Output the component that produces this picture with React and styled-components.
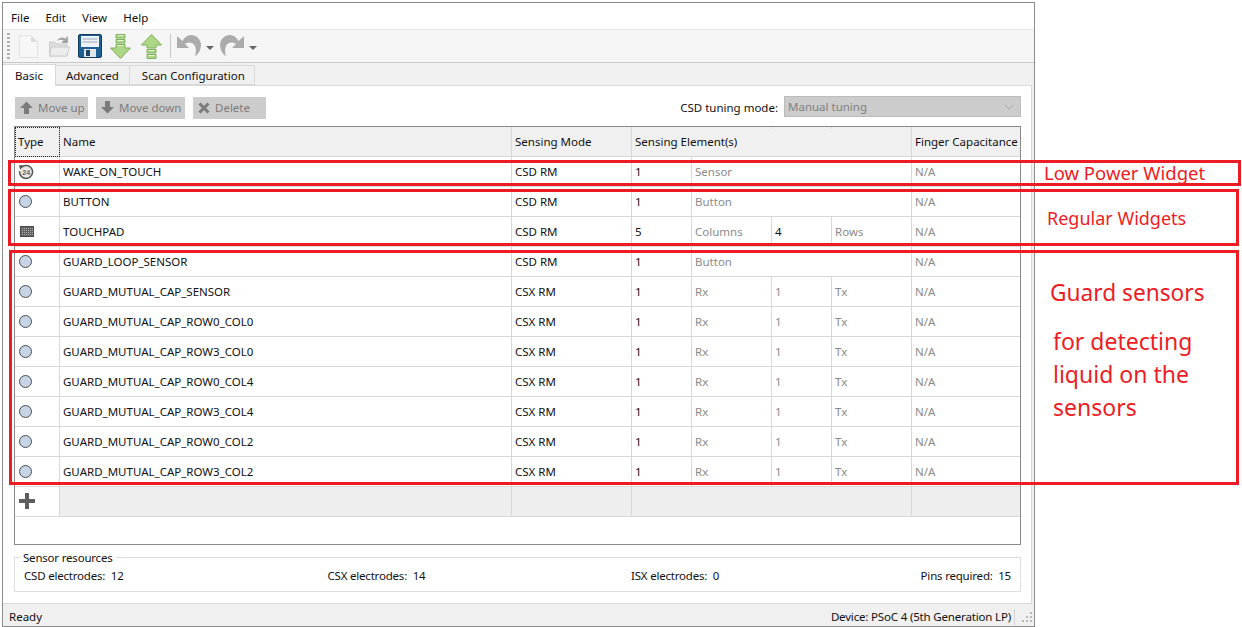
import React from "react"
import styled, { createGlobalStyle } from "styled-components"

const GlobalStyle = createGlobalStyle`
  html, body {
    margin: 0;
    padding: 0;
    background: #fff;
  }
  body {
    font-family: "Noto Sans", "Open Sans", sans-serif;
    font-size: 11.5px;
    color: #111;
  }
`

const COLUMNS = "45px 452px 120px 60px 80px 60px 80px 108px"

const widgets = [
  { icon: "wake", name: "WAKE_ON_TOUCH", mode: "CSD RM", count: 1, label: "Sensor" },
  { icon: "button", name: "BUTTON", mode: "CSD RM", count: 1, label: "Button" },
  { icon: "pad", name: "TOUCHPAD", mode: "CSD RM", count: 5, label: "Columns", second: 4, secondLabel: "Rows", active: true },
  { icon: "button", name: "GUARD_LOOP_SENSOR", mode: "CSD RM", count: 1, label: "Button" },
  { icon: "button", name: "GUARD_MUTUAL_CAP_SENSOR", mode: "CSX RM", count: 1, label: "Rx", second: 1, secondLabel: "Tx" },
  { icon: "button", name: "GUARD_MUTUAL_CAP_ROW0_COL0", mode: "CSX RM", count: 1, label: "Rx", second: 1, secondLabel: "Tx" },
  { icon: "button", name: "GUARD_MUTUAL_CAP_ROW3_COL0", mode: "CSX RM", count: 1, label: "Rx", second: 1, secondLabel: "Tx" },
  { icon: "button", name: "GUARD_MUTUAL_CAP_ROW0_COL4", mode: "CSX RM", count: 1, label: "Rx", second: 1, secondLabel: "Tx" },
  { icon: "button", name: "GUARD_MUTUAL_CAP_ROW3_COL4", mode: "CSX RM", count: 1, label: "Rx", second: 1, secondLabel: "Tx" },
  { icon: "button", name: "GUARD_MUTUAL_CAP_ROW0_COL2", mode: "CSX RM", count: 1, label: "Rx", second: 1, secondLabel: "Tx" },
  { icon: "button", name: "GUARD_MUTUAL_CAP_ROW3_COL2", mode: "CSX RM", count: 1, label: "Rx", second: 1, secondLabel: "Tx" },
]

const NewFileIcon = () => (
  <svg width="19" height="23" viewBox="0 0 19 23">
    <path d="M0.5 0.5H12L18.5 7V22.5H0.5Z" fill="#f7f7f7" stroke="#e3e3e3" />
    <path d="M12 0.5V7H18.5Z" fill="#dddddd" />
  </svg>
)

const OpenIcon = () => (
  <svg width="23" height="22" viewBox="0 0 23 22">
    <path d="M1.5 7H7L9 9H19V21H1.5Z" fill="#dcdcdc" stroke="#cdcdcd" />
    <path d="M1.5 21L3.5 12H21.5L19 21Z" fill="#ececec" stroke="#cdcdcd" />
    <path d="M9 6C10.5 2.5 14.5 1.5 17.5 3.5L20 1V8H13L15.5 5.5C14 4.5 11.5 4.5 9 6Z" fill="#a5a5a5" />
  </svg>
)

const SaveIcon = () => (
  <svg width="24" height="24" viewBox="0 0 24 24">
    <rect x="0.5" y="0.5" width="23" height="23" rx="1.5" fill="#1b5f93" stroke="#173d5c" />
    <rect x="3" y="2" width="18" height="11" fill="#eef2f6" />
    <path d="M4.5 5H19.5M4.5 8H19.5" stroke="#b4c2cf" strokeWidth="1.5" />
    <rect x="6" y="15" width="12" height="8" fill="#dfe6ec" />
    <rect x="8" y="16" width="4" height="6" fill="#1f4468" />
  </svg>
)

const DownloadIcon = () => (
  <svg width="21" height="25" viewBox="0 0 21 25">
    <path d="M6 0.5H15V4H6ZM6 5.5H15V9H6ZM6 10.5H15V14H20.5L10.5 24.5L0.5 14H6Z" fill="#aed785" stroke="#7fb05a" />
    <path d="M7.5 1.5H13.5M7.5 6.5H13.5M7.5 11.5H13.5" stroke="#e2f2d0" />
  </svg>
)

const UploadIcon = () => (
  <svg width="21" height="25" viewBox="0 0 21 25">
    <path d="M10.5 0.5L20.5 11H15V14H6V11H0.5ZM6 15.5H15V19H6ZM6 20.5H15V24.5H6Z" fill="#aed785" stroke="#7fb05a" />
    <path d="M7.5 16.5H13.5M7.5 21.5H13.5" stroke="#e2f2d0" />
  </svg>
)

const UndoIcon = ({ flip }) => (
  <svg width="24" height="22" viewBox="0 0 24 22" style={flip ? { transform: "scaleX(-1)" } : undefined}>
    <path d="M0 1V13H12L8 9C11 6.5 16 7 18 11C19.5 14 19 18 18 21.5C22 18.5 24 14 24 10C24 4 19 0 14 0C10.5 0 7.5 2 5.5 6Z" fill="#ababab" />
  </svg>
)

const Caret = styled.i`
  width: 0;
  height: 0;
  margin: 3px 0 0 5px;
  border-left: 4px solid transparent;
  border-right: 4px solid transparent;
  border-top: 4px solid #666;
`

const WakeIcon = () => (
  <svg width="16" height="16" viewBox="0 0 18 18">
    <circle cx="9" cy="9.5" r="7" fill="#e8e8e8" />
    <path d="M4 3.6A7.3 7.3 0 1 1 1.8 8" fill="none" stroke="#555" strokeWidth="1.7" />
    <path d="M1 1.5L6.5 1.5L2.5 6.5Z" fill="#555" />
    <text x="9.3" y="12.5" fontSize="8" fontWeight="700" textAnchor="middle" fill="#666" fontFamily="Liberation Sans, sans-serif">24</text>
  </svg>
)

const PadIcon = () => (
  <svg width="14" height="11" viewBox="0 0 14 11" style={{ marginLeft: 2 }}>
    <defs>
      <pattern id="padDots" width="2" height="2" patternUnits="userSpaceOnUse">
        <rect width="2" height="2" fill="#626262" />
        <rect width="1" height="1" fill="#acacac" />
      </pattern>
    </defs>
    <rect x="0.5" y="0.5" width="13" height="10" fill="url(#padDots)" stroke="#4a4a4a" />
  </svg>
)

const PlusIcon = () => (
  <svg width="16" height="16" viewBox="0 0 16 16">
    <path d="M6 0H10V6H16V10H10V16H6V10H0V6H6Z" fill="#5e5e5e" />
  </svg>
)

const ArrowUp = () => (
  <svg width="13" height="13" viewBox="0 0 13 13">
    <path d="M6.5 0.5L13 7H9V13H4V7H0Z" fill="#7b7b7b" />
  </svg>
)

const ArrowDown = () => (
  <svg width="13" height="13" viewBox="0 0 13 13">
    <path d="M4 0H9V6H13L6.5 12.5L0 6H4Z" fill="#7b7b7b" />
  </svg>
)

const Cross = () => (
  <svg width="12" height="12" viewBox="0 0 12 12">
    <path d="M1.5 1.5L10.5 10.5M10.5 1.5L1.5 10.5" stroke="#7b7b7b" strokeWidth="3" />
  </svg>
)

const Chevron = () => (
  <svg width="10" height="6" viewBox="0 0 10 6">
    <path d="M1 1L5 5L9 1" fill="none" stroke="#a8a8a8" />
  </svg>
)

const Grip = () => (
  <svg width="11" height="11" viewBox="0 0 11 11">
    <path d="M8 1h2v2H8zM4 5h2v2H4zM8 5h2v2H8zM0 9h2v2H0zM4 9h2v2H4zM8 9h2v2H8z" fill="#b8b8b8" />
  </svg>
)

const TypeIcon = ({ kind }) => {
  if (kind === "wake") return <WakeIcon />
  if (kind === "pad") return <PadIcon />
  return <Dot />
}

const App = () => {
  return (
    <>
      <GlobalStyle />
      <Page>
        <Window>
          <MenuBar>
            <MenuItem>File</MenuItem>
            <MenuItem>Edit</MenuItem>
            <MenuItem>View</MenuItem>
            <MenuItem>Help</MenuItem>
          </MenuBar>
          <Toolbar>
            <Handle />
            <ToolSlot $gap={9}><NewFileIcon /></ToolSlot>
            <ToolSlot $gap={10}><OpenIcon /></ToolSlot>
            <ToolSlot $gap={7}><SaveIcon /></ToolSlot>
            <ToolSlot $gap={8}><DownloadIcon /></ToolSlot>
            <ToolSlot $gap={10}><UploadIcon /></ToolSlot>
            <ToolSeparator />
            <ToolSlot $gap={6}>
              <UndoIcon />
              <Caret />
            </ToolSlot>
            <ToolSlot $gap={6}>
              <UndoIcon flip />
              <Caret />
            </ToolSlot>
          </Toolbar>
          <TabBar>
            <Tab $active $pad={12}>Basic</Tab>
            <Tab $pad={10}>Advanced</Tab>
            <Tab $pad={12} $padRight={9}>Scan Configuration</Tab>
          </TabBar>
          <Panel>
            <Actions>
              <ActionButton $width={73}><ArrowUp />Move up</ActionButton>
              <ActionButton $width={89}><ArrowDown />Move down</ActionButton>
              <ActionButton $width={73}><Cross />Delete</ActionButton>
              <TuningLabel>CSD tuning mode:</TuningLabel>
              <Combo>
                Manual tuning
                <Chevron />
              </Combo>
            </Actions>
            <Table>
              <HeaderRow>
                <HeaderCell $focused>Type</HeaderCell>
                <HeaderCell>Name</HeaderCell>
                <HeaderCell>Sensing Mode</HeaderCell>
                <HeaderCell $span={4}>
                  Sensing Element(s)
                  <Tick $left={139} />
                  <Tick $left={199} />
                </HeaderCell>
                <HeaderCell $last>Finger Capacitance</HeaderCell>
              </HeaderRow>
              {widgets.map((w) => (
                <Row key={w.name}>
                  <IconCell><TypeIcon kind={w.icon} /></IconCell>
                  <Cell>{w.name}</Cell>
                  <Cell>{w.mode}</Cell>
                  <Cell>{w.count}</Cell>
                  {w.second ? (
                    <>
                      <Cell $muted>{w.label}</Cell>
                      <Cell $muted={!w.active}>{w.second}</Cell>
                      <Cell $muted>{w.secondLabel}</Cell>
                    </>
                  ) : (
                    <Cell $muted $span={3}>{w.label}</Cell>
                  )}
                  <Cell $muted $last>N/A</Cell>
                </Row>
              ))}
              <AddRow>
                <AddCell><PlusIcon /></AddCell>
                <GrayCell />
                <GrayCell />
                <GrayCell $span={4} />
                <GrayCell $last />
              </AddRow>
            </Table>
            <Resources>
              <ResourcesTitle>Sensor resources</ResourcesTitle>
              <Stat>CSD electrodes:&nbsp; 12</Stat>
              <Stat>CSX electrodes:&nbsp; 14</Stat>
              <Stat>ISX electrodes:&nbsp; 0</Stat>
              <Stat $right>Pins required:&nbsp; 15</Stat>
            </Resources>
          </Panel>
          <StatusBar>
            <span>Ready</span>
            <DeviceInfo>Device: PSoC 4 (5th Generation LP)</DeviceInfo>
            <StatusDivider />
            <Grip />
          </StatusBar>
        </Window>
        <Outline $left={8} $top={160} $height={26} $width={1233} />
        <Outline $left={8} $top={189} $height={57} $width={1231} />
        <Outline $left={9} $top={250} $height={235} $width={1230} />
        <Note $left={1044} $top={161} $size={18.5}>Low Power Widget</Note>
        <Note $left={1047} $top={206} $size={18}>Regular Widgets</Note>
        <Note $left={1050} $top={278} $size={22.7}>Guard sensors</Note>
        <Note $left={1053} $top={326} $size={23}>for detecting</Note>
        <Note $left={1053} $top={359} $size={23}>liquid on the</Note>
        <Note $left={1053} $top={392} $size={23}>sensors</Note>
      </Page>
    </>
  )
}

const Page = styled.div`
  position: relative;
  width: 1242px;
  height: 627px;
  padding: 2px 0 0 2px;
  box-sizing: border-box;
  overflow: hidden;
`

const Window = styled.div`
  width: 1033px;
  height: 625px;
  box-sizing: border-box;
  display: flex;
  flex-direction: column;
  border: 1px solid #8c8c8c;
  background: #f0f0f0;
`

const MenuBar = styled.div`
  height: 26px;
  flex: none;
  display: flex;
  align-items: center;
  gap: 16px;
  padding: 3px 0 0 8px;
  box-sizing: border-box;
  background: #fff;
`

const MenuItem = styled.span`
  color: #111;
`

const Toolbar = styled.div`
  height: 34px;
  flex: none;
  display: flex;
  align-items: center;
  box-sizing: border-box;
  padding-left: 4px;
  background: #f5f5f5;
  border-top: 1px solid #e8e8e8;
  border-bottom: 1px solid #c8c8c8;
`

const Handle = styled.div`
  width: 3px;
  height: 26px;
  background: repeating-linear-gradient(to bottom, #b0b0b0 0 2px, transparent 2px 4px);
`

const ToolSlot = styled.div`
  display: flex;
  align-items: center;
  margin-left: ${(p) => p.$gap}px;
`

const ToolSeparator = styled.div`
  width: 1px;
  height: 24px;
  margin-left: 8px;
  background: #c8c8c8;
`

const TabBar = styled.div`
  height: 21px;
  flex: none;
  display: flex;
  align-items: flex-end;
  margin-top: 1px;
`

const Tab = styled.div`
  height: ${(p) => (p.$active ? "22px" : "20px")};
  box-sizing: border-box;
  display: flex;
  align-items: center;
  padding: 0 ${(p) => p.$padRight || p.$pad}px 0 ${(p) => p.$pad}px;
  margin-bottom: ${(p) => (p.$active ? "-1px" : "0")};
  background: ${(p) => (p.$active ? "#fff" : "#f0f0f0")};
  border: 1px solid #d9d9d9;
  border-left: ${(p) => (p.$active ? "none" : "1px solid #d9d9d9")};
  border-bottom: ${(p) => (p.$active ? "none" : "1px solid #d9d9d9")};
  position: relative;
  z-index: ${(p) => (p.$active ? 1 : 0)};
  margin-left: ${(p) => (p.$active ? "0" : "-1px")};
`

const Panel = styled.div`
  flex: 1;
  min-height: 0;
  background: #fff;
  border: 1px solid #d9d9d9;
  border-left: none;
  margin-right: 2px;
  padding: 10px 10px 0 11px;
  display: flex;
  flex-direction: column;
`

const Actions = styled.div`
  height: 23px;
  flex: none;
  display: flex;
  align-items: center;
  gap: 8px;
  padding-left: 1px;
`

const ActionButton = styled.button`
  width: ${(p) => p.$width}px;
  height: 22px;
  padding: 0 0 0 4px;
  display: flex;
  align-items: center;
  gap: 5px;
  border: 1px solid #cdcdcd;
  background: #cccccc;
  color: #7c7c7c;
  font: inherit;
  white-space: nowrap;
`

const TuningLabel = styled.span`
  margin-left: auto;
  margin-right: -2px;
  padding-bottom: 1px;
`

const Combo = styled.div`
  width: 237px;
  height: 21px;
  margin-bottom: 2px;
  box-sizing: border-box;
  display: flex;
  align-items: center;
  justify-content: space-between;
  padding: 0 6px 0 3px;
  background: #cccccc;
  border: 1px solid #bcbcbc;
  color: #808080;
`

const Table = styled.div`
  width: 1007px;
  height: 419px;
  flex: none;
  box-sizing: border-box;
  margin-top: 7px;
  border: 1px solid #8a8a8a;
`

const Row = styled.div`
  display: grid;
  grid-template-columns: ${COLUMNS};
  height: 30px;
`

const HeaderRow = styled(Row)`
  background: #f0f0f0;
`

const HeaderCell = styled.div`
  position: relative;
  grid-column: span ${(p) => p.$span || 1};
  display: flex;
  align-items: center;
  padding-left: 3px;
  box-sizing: border-box;
  white-space: nowrap;
  border-right: ${(p) => (p.$last ? "none" : "1px solid #d8d8d8")};
  border-bottom: 1px solid #d8d8d8;
  outline: ${(p) => (p.$focused ? "1px dotted #222" : "none")};
  outline-offset: -1px;
`

const Tick = styled.i`
  position: absolute;
  top: 0;
  left: ${(p) => p.$left}px;
  width: 1px;
  height: 2px;
  background: #d8d8d8;
`

const Cell = styled.div`
  grid-column: span ${(p) => p.$span || 1};
  display: flex;
  align-items: center;
  padding-left: 3px;
  box-sizing: border-box;
  white-space: nowrap;
  color: ${(p) => (p.$muted ? "#8a8a8a" : "#111")};
  border-right: ${(p) => (p.$last ? "none" : "1px solid #d8d8d8")};
  border-bottom: 1px solid #d8d8d8;
`

const IconCell = styled(Cell)`
  padding: 0 0 0 3px;
`

const Dot = styled.span`
  width: 11px;
  height: 11px;
  margin-left: 1px;
  border-radius: 50%;
  background: #c6d5e6;
  border: 1px solid #4c4c4c;
`

const AddRow = styled(Row)``

const AddCell = styled(Cell)`
  padding: 0 0 1px 4px;
`

const GrayCell = styled(Cell)`
  background: #eeeeee;
`

const Resources = styled.div`
  position: relative;
  width: 1007px;
  height: 35px;
  flex: none;
  box-sizing: border-box;
  margin-top: 12px;
  padding: 2px 9px 0 9px;
  display: grid;
  grid-template-columns: repeat(3, 303.5px) minmax(0, 1fr);
  align-items: center;
  letter-spacing: -0.2px;
  border: 1px solid #dedede;
`

const ResourcesTitle = styled.span`
  position: absolute;
  top: -7px;
  left: 5px;
  padding: 0 3px;
  background: #fff;
  line-height: 14px;
`

const Stat = styled.span`
  justify-self: ${(p) => (p.$right ? "end" : "start")};
  white-space: nowrap;
`

const StatusBar = styled.div`
  height: 22px;
  flex: none;
  display: flex;
  align-items: center;
  padding: 3px 1px 0 6px;
  box-sizing: border-box;
  background: #f0f0f0;
`

const DeviceInfo = styled.span`
  margin-left: auto;
  letter-spacing: -0.17px;
`

const StatusDivider = styled.i`
  width: 1px;
  height: 16px;
  margin: 0 7px 0 3px;
  background: #d5d5d5;
`

const Outline = styled.div`
  position: absolute;
  left: ${(p) => p.$left}px;
  top: ${(p) => p.$top}px;
  width: ${(p) => p.$width}px;
  height: ${(p) => p.$height}px;
  box-sizing: border-box;
  border: 3px solid #ed1c24;
  pointer-events: none;
`

const Note = styled.div`
  position: absolute;
  left: ${(p) => p.$left}px;
  top: ${(p) => p.$top}px;
  font-size: ${(p) => p.$size}px;
  line-height: 1.35;
  color: #ed1c24;
  white-space: nowrap;
`

export default App
